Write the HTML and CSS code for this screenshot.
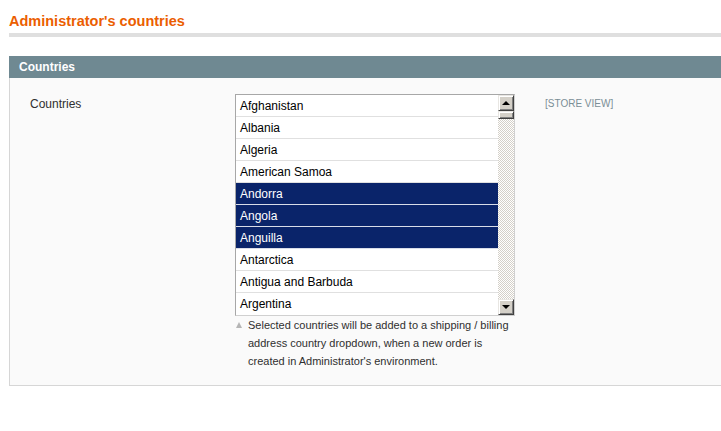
FILE: index.html
```html
<!DOCTYPE html>
<html>
<head>
<meta charset="utf-8">
<link rel="stylesheet" href="styles.css">
</head>
<body>
<div class="page">
  <div class="content-header">
    <h3>Administrator's countries</h3>
  </div>
  <div class="entry-edit">
    <div class="section-head">Countries</div>
    <div class="fieldset">
      <div class="label">Countries</div>
      <div class="value">
        <div class="listbox">
          <ul class="options">
            <li>Afghanistan</li>
            <li>Albania</li>
            <li>Algeria</li>
            <li>American Samoa</li>
            <li class="sel">Andorra</li>
            <li class="sel">Angola</li>
            <li class="sel">Anguilla</li>
            <li>Antarctica</li>
            <li>Antigua and Barbuda</li>
            <li class="last">Argentina</li>
          </ul>
          <div class="scrollbar">
            <div class="btn up"><span class="arrow-up"></span></div>
            <div class="thumb"></div>
            <div class="track"></div>
            <div class="btn down"><span class="arrow-down"></span></div>
          </div>
        </div>
        <p class="note">Selected countries will be added to a shipping / billing address country dropdown, when a new order is created in Administrator's environment.</p>
      </div>
      <div class="scope">[STORE VIEW]</div>
    </div>
  </div>
</div>
</body>
</html>
```

FILE: styles.css
```css
html, body {
  margin: 0;
  padding: 0;
  background: #fff;
}
body {
  font-family: "Liberation Sans", Arial, sans-serif;
  font-size: 12px;
  color: #2f2f2f;
}
.page {
  padding-left: 9px;
}
.content-header {
  padding-top: 10px;
  border-bottom: 4px solid #dfdfdf;
  margin-bottom: 19px;
}
.content-header h3 {
  margin: 0;
  font-size: 14.5px;
  line-height: 23px;
  font-weight: bold;
  color: #eb5e00;
}
.section-head {
  background: #6f8992;
  color: #fff;
  font-weight: bold;
  font-size: 12px;
  line-height: 22px;
  height: 22px;
  padding-left: 10px;
}
.fieldset {
  background: #fafafa;
  border: 1px solid #d6d6d6;
  border-top: 0;
  border-right: 0;
  height: 291px;
  padding: 16px 0 0 20px;
  display: flex;
  align-items: flex-start;
}
.label {
  width: 205px;
  line-height: 20px;
  color: #2f2f2f;
}
.value {
  width: 280px;
}
.listbox {
  display: flex;
  width: 278px;
  height: 220px;
  border: 1px solid #a7a7a7;
  border-right-color: #d0d0d0;
  border-bottom-color: #d0d0d0;
  background: #fff;
}
.options {
  list-style: none;
  margin: 0;
  padding: 0;
  flex: 1;
}
.options li {
  height: 20px;
  padding-top: 1px;
  line-height: 21px;
  border-bottom: 1px solid #e0e0e0;
  padding-left: 4px;
  color: #000;
}
.options li.last {
  border-bottom: 0;
}
.options li.sel {
  background: #0a246a;
  color: #fff;
  border-bottom-color: #d8dce8;
}
.scrollbar {
  width: 16px;
  display: flex;
  flex-direction: column;
}
.btn, .thumb {
  box-sizing: border-box;
  background: #d4d0c8;
  border-top: 1px solid #e8e6e2;
  border-left: 1px solid #e8e6e2;
  border-right: 1px solid #404040;
  border-bottom: 1px solid #404040;
  box-shadow: inset 1px 1px 0 #fff, inset -1px -1px 0 #808080;
}
.btn {
  height: 16px;
  display: flex;
  align-items: center;
  justify-content: center;
}
.thumb {
  height: 8px;
}
.track {
  flex: 1;
  background-color: #fff;
  background-image: repeating-conic-gradient(#d4d0c8 0 25%, #fff 0 50%);
  background-size: 2px 2px;
}
.arrow-up {
  width: 0;
  height: 0;
  border-left: 4px solid transparent;
  border-right: 4px solid transparent;
  border-bottom: 4px solid #000;
}
.arrow-down {
  width: 0;
  height: 0;
  border-left: 4px solid transparent;
  border-right: 4px solid transparent;
  border-top: 4px solid #000;
}
.note {
  position: relative;
  margin: 0;
  padding-left: 13px;
  font-size: 11px;
  line-height: 18px;
  color: #2f2f2f;
}
.note::before {
  content: "";
  position: absolute;
  left: 1px;
  top: 6px;
  width: 0;
  height: 0;
  border-left: 3.5px solid transparent;
  border-right: 3.5px solid transparent;
  border-bottom: 6px solid #b5b5b5;
}
.scope {
  margin-left: 30px;
  font-size: 10px;
  line-height: 20px;
  color: #7a8e96;
}
```
